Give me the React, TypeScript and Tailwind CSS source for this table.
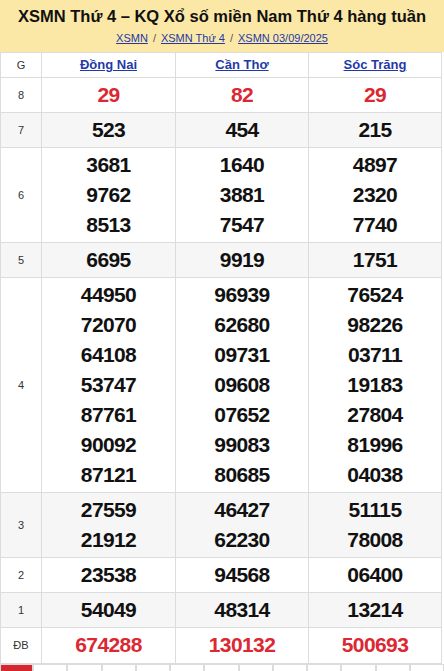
const provinces = ['Đồng Nai', 'Cần Thơ', 'Sóc Trăng'];

const rows: { label: string; values: string[][]; red?: boolean }[] = [
  { label: '8', values: [['29'], ['82'], ['29']], red: true },
  { label: '7', values: [['523'], ['454'], ['215']] },
  {
    label: '6',
    values: [
      ['3681', '9762', '8513'],
      ['1640', '3881', '7547'],
      ['4897', '2320', '7740'],
    ],
  },
  { label: '5', values: [['6695'], ['9919'], ['1751']] },
  {
    label: '4',
    values: [
      ['44950', '72070', '64108', '53747', '87761', '90092', '87121'],
      ['96939', '62680', '09731', '09608', '07652', '99083', '80685'],
      ['76524', '98226', '03711', '19183', '27804', '81996', '04038'],
    ],
  },
  {
    label: '3',
    values: [
      ['27559', '21912'],
      ['46427', '62230'],
      ['51115', '78008'],
    ],
  },
  { label: '2', values: [['23538'], ['94568'], ['06400']] },
  { label: '1', values: [['54049'], ['48314'], ['13214']] },
  { label: 'ĐB', values: [['674288'], ['130132'], ['500693']], red: true },
];

export default function App() {
  return (
    <div className="w-[444px] bg-white font-['Liberation_Sans',Arial,sans-serif] text-[#222]">
      <div className="h-[52px] bg-[#fce8a6] pt-[4px] text-center">
        <h1 className="whitespace-nowrap text-[16.5px] leading-[24px] font-bold text-[#111]">
          XSMN Thứ 4 – KQ Xổ số miền Nam Thứ 4 hàng tuần
        </h1>
        <div className="mt-[1px] text-[11px] leading-[18px] text-[#555]">
          <a className="text-[#2438a6] underline">XSMN</a>
          <span className="mx-[5px]">/</span>
          <a className="text-[#2438a6] underline">XSMN Thứ 4</a>
          <span className="mx-[5px]">/</span>
          <a className="text-[#2438a6] underline">XSMN 03/09/2025</a>
        </div>
      </div>

      <table className="w-[441px] border-collapse table-fixed">
        <colgroup>
          <col className="w-[41px]" />
          <col className="w-[134px]" />
          <col className="w-[133px]" />
          <col className="w-[133px]" />
        </colgroup>
        <thead>
          <tr className="h-[25px]">
            <th className="border border-[#dcdcdc] text-[11px] font-normal text-[#333]">G</th>
            {provinces.map((p) => (
              <th key={p} className="border border-[#dcdcdc] text-[13px] font-bold">
                <a className="text-[#1f3aa8] underline">{p}</a>
              </th>
            ))}
          </tr>
        </thead>
        <tbody>
          {rows.map((r, i) => (
            <tr key={r.label} className={i % 2 === 1 ? 'bg-[#f6f6f6]' : 'bg-white'}>
              <td className="border border-[#dcdcdc] text-center text-[11px] text-[#333]">{r.label}</td>
              {r.values.map((col, j) => (
                <td
                  key={j}
                  className={
                    'border border-[#dcdcdc] pt-[2px] text-center ' +
                    (r.label === 'ĐB' ? 'pb-[3px]' : 'pb-[2px]')
                  }
                >
                  {col.map((n, k) => (
                    <div
                      key={k}
                      className={
                        'text-[21px] leading-[30px] font-bold tracking-[-0.6px] ' +
                        (r.red ? 'text-[#dc2832]' : 'text-[#111]')
                      }
                    >
                      {n}
                    </div>
                  ))}
                </td>
              ))}
            </tr>
          ))}
        </tbody>
      </table>

      <div className="flex">
        {Array.from({ length: 13 }).map((_, i) => (
          <div
            key={i}
            className={
              'h-[24px] border border-[#dcdcdc] ' +
              (i === 0 ? 'w-[33px] bg-[#d7262e]' : 'w-[34.25px]')
            }
          />
        ))}
      </div>
    </div>
  );
}
